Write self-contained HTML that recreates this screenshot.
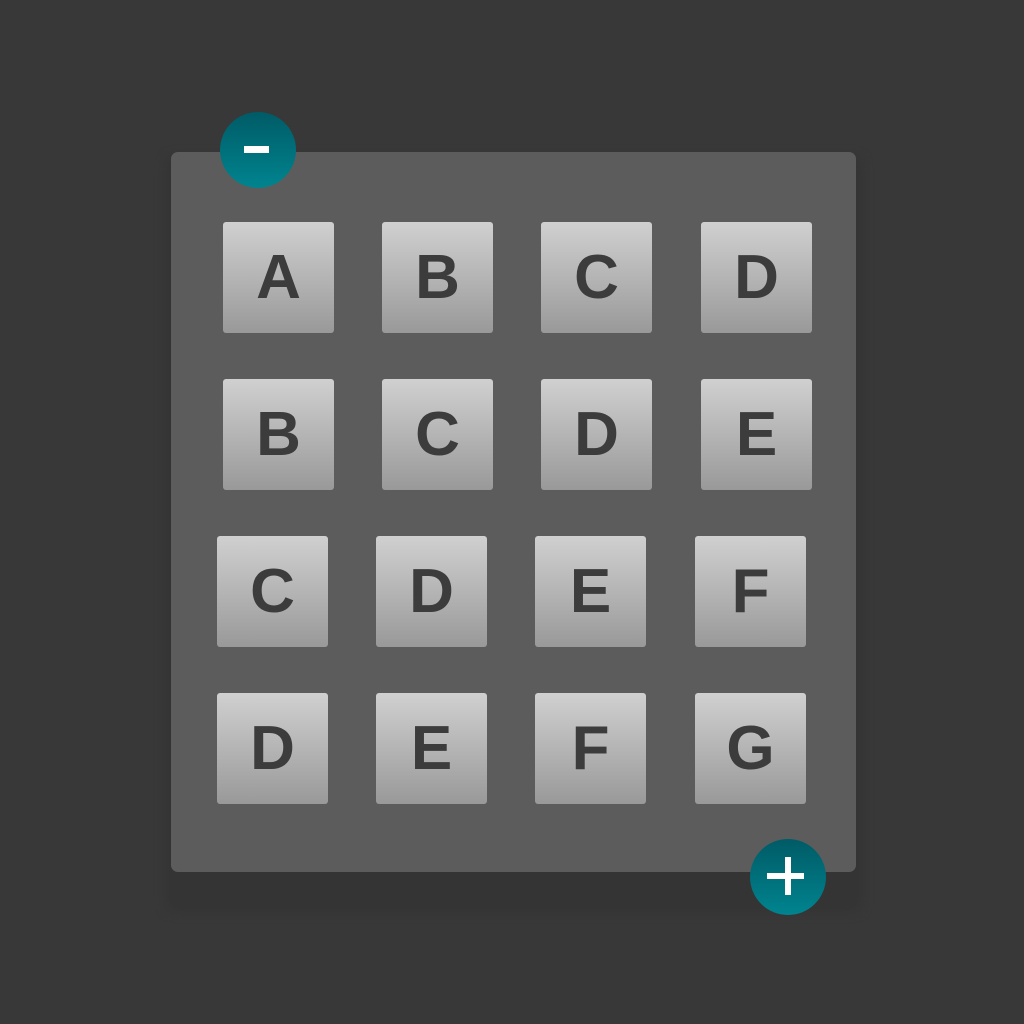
<!DOCTYPE html>
<html><head><style>
html,body{margin:0;padding:0;width:1024px;height:1024px;background:#383838;overflow:hidden;position:relative;font-family:"Liberation Sans",sans-serif}
.shadow{position:absolute;left:166px;top:156px;width:696px;height:756px;background:#343434;border-radius:8px;filter:blur(5px)}
.panel{position:absolute;left:171px;top:152px;width:685px;height:720px;background:#5c5c5c;border-radius:7px}
.t{position:absolute;width:111px;height:111px;border-radius:3px;background:linear-gradient(#d0d0d0,#999);color:#3c3c3c;font-weight:bold;font-size:62px;line-height:111px;text-align:center}
.c{position:absolute;width:76px;height:76px;border-radius:50%;background:linear-gradient(#005b66,#00848f)}
.bar{position:absolute;background:#fff}
</style></head><body>
<div class="shadow"></div>
<div class="panel"></div>
<div class="t" style="left:223px;top:222px">A</div>
<div class="t" style="left:382px;top:222px">B</div>
<div class="t" style="left:541px;top:222px">C</div>
<div class="t" style="left:701px;top:222px">D</div>
<div class="t" style="left:223px;top:379px">B</div>
<div class="t" style="left:382px;top:379px">C</div>
<div class="t" style="left:541px;top:379px">D</div>
<div class="t" style="left:701px;top:379px">E</div>
<div class="t" style="left:217px;top:536px">C</div>
<div class="t" style="left:376px;top:536px">D</div>
<div class="t" style="left:535px;top:536px">E</div>
<div class="t" style="left:695px;top:536px">F</div>
<div class="t" style="left:217px;top:693px">D</div>
<div class="t" style="left:376px;top:693px">E</div>
<div class="t" style="left:535px;top:693px">F</div>
<div class="t" style="left:695px;top:693px">G</div>
<div class="c" style="left:220px;top:112px"></div>
<div class="bar" style="left:244px;top:146px;width:25px;height:7px"></div>
<div class="c" style="left:750px;top:839px"></div>
<div class="bar" style="left:767px;top:873px;width:37px;height:6px"></div>
<div class="bar" style="left:785px;top:857px;width:6px;height:38px"></div>
</body></html>
